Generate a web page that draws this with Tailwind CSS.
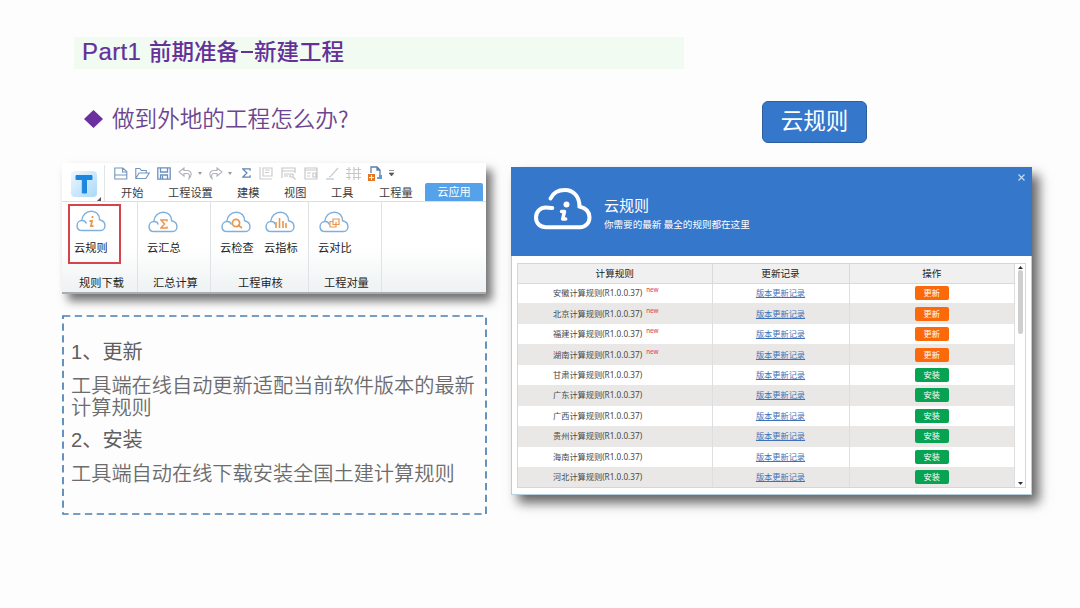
<!DOCTYPE html>
<html lang="zh-CN">

<head>
    <meta charset="UTF-8">
    <meta name="viewport" content="width=device-width, initial-scale=1.0">
    <title>前期准备-新建工程</title>
    <script src="https://cdn.jsdelivr.net/npm/@tailwindcss/browser@4"></script>
</head>

<body class="w-[1080px] h-[608px] overflow-hidden bg-[#fdfdfd] pt-[37px] font-['Noto_Sans','Noto_Sans_CJK_SC',sans-serif]">
    <svg class="hidden">
        <symbol id="cloud" viewBox="0 0 58 42">
            <path d="M11 20C12 9 20 2 30 2c9 0 15.500 6.500 15.500 16.500C52 20 56 24 56 30c0 5.500-4 9.500-9.500 9.500H12C6 39.500 2 35.500 2 30s4-10 10-10c3.500 0 6.500 2 7.500 5" fill="none" stroke="currentColor" stroke-width="2.800" stroke-linecap="round" />
        </symbol>
    </svg>

    <header class="ml-[74px] w-[610px] h-8 bg-[#f1fbf1] pl-2 flex items-center text-[22.500px] leading-8 text-[#64309a] font-medium">
        <h1 class="flex items-center whitespace-nowrap font-medium -mt-[3px]">
            <span class="w-[67px] font-['Liberation_Sans'] text-[24px] tracking-[0.400px] [-webkit-text-stroke:0.200px]">Part1</span>
            <span>前期准备</span>
            <span class="w-[15px] flex justify-center"><i class="block w-3 h-[2px] bg-[#64309a]"></i></span>
            <span>新建工程</span>
        </h1>
    </header>

    <main class="flex gap-6 pl-[62px]">
        <section class="w-[425px] shrink-0">
            <h2 class="h-[94px] pt-[35px] pl-[22px] flex items-start text-[22.600px] leading-[30px] text-[#6c4591] font-[350]">
                <svg class="w-[19px] h-[18px] mt-[6px] mr-[9px]" viewBox="0 0 19 18"><path d="M9.500 0L19 9l-9.500 9L0 9z" fill="#6c2fa0" /></svg>
                <span>做到外地的工程怎么办</span><span class="font-['Noto_Sans_CJK_SC']">?</span>
            </h2>

            <!-- ribbon -->
            <div class="w-[424px] h-[131px] bg-white shadow-[6px_7px_9px_rgba(0,0,0,0.550)] border-b-2 border-[#a9adb0] text-[#3c3c3c] text-[11.200px] whitespace-nowrap">
                <div class="h-[39px] flex border-b border-[#dcdfe2]">
                    <div class="w-[42px] pl-[9px] pt-[8px] flex items-end">
                        <svg class="w-[26px] h-[26px] mb-1" viewBox="0 0 26 26">
                            <defs><linearGradient id="tile" x2="1" y2="1"><stop stop-color="#eef7fe" /><stop offset="1" stop-color="#a9d9f8" /></linearGradient></defs>
                            <rect width="26" height="26" rx="4" fill="url(#tile)" />
                            <path d="M5 4.500h16v4H15.500V22h-4.200V8.500H5z" fill="#1b86e0" stroke="#1b86e0" stroke-linejoin="round" />
                        </svg>
                        <svg class="w-[4px] h-[4px]" viewBox="0 0 4 4"><path d="M4 0v4H0z" fill="#555" /></svg>
                    </div>
                    <div class="flex-1 border-l border-[#e2e4e7] mt-[2px]">
                        <div class="h-[16px] flex items-center pl-[9px]">
                            <svg class="w-[14px] h-[13px] shrink-0" viewBox="0 0 14 13" fill="none" stroke="#7296be" stroke-width="1.100"><path d="M.8 12V1h8l4 3.500V12zM8.500 1v4H13M.8 8H13" /></svg>
                            <svg class="w-[15px] h-[13px] ml-[7px] shrink-0" viewBox="0 0 15 13" fill="none" stroke="#7296be" stroke-width="1.100"><path d="M.8 11.500V1.500h4l1.500 2h5V6M.8 11.500L4 6h10.300l-3.500 5.500z" /></svg>
                            <svg class="w-[14px] h-[13px] ml-[7px] shrink-0" viewBox="0 0 14 13" fill="none" stroke="#6a90bf" stroke-width="1.300"><path d="M.8.800h12.400v11.400H.8zM3.500 1v4h7V1M3.500 12V8h7v4M5.500 9v3" /></svg>
                            <svg class="w-[15px] h-[13px] ml-[7px] shrink-0" viewBox="0 0 15 13" fill="none" stroke="#b0b4b8" stroke-width="1.100"><path d="M6 1L1 5l5 4V6.500h3c2 0 3 1.300 2 5 3.500-3.500 2.500-8-2-8H6z" /></svg>
                            <svg class="w-[4px] h-[3px] ml-[5px] shrink-0" viewBox="0 0 4 3"><path d="M0 0h4L2 3z" fill="#999" /></svg>
                            <svg class="w-[15px] h-[13px] ml-[6px] shrink-0" viewBox="0 0 15 13" fill="none" stroke="#b0b4b8" stroke-width="1.100"><path d="M9 1l5 4-5 4V6.500H6c-2 0-3 1.300-2 5-3.500-3.500-2.500-8 2-8h3z" /></svg>
                            <svg class="w-[4px] h-[3px] ml-[5px] shrink-0" viewBox="0 0 4 3"><path d="M0 0h4L2 3z" fill="#999" /></svg>
                            <svg class="w-[9px] h-[10px] ml-[10px] shrink-0" viewBox="0 0 10 11" fill="none" stroke="#5f86b6" stroke-width="1.400"><path d="M9 3V1H1l4.500 4.500L1 10h8V8" /></svg>
                            <svg class="w-[14px] h-[13px] ml-[8px] shrink-0" viewBox="0 0 14 13" fill="none" stroke="#cbcdcf" stroke-width="1.200"><path d="M1 0v12h12M4 1h9v8H4zM6 3h5M6 5.500h4" /></svg>
                            <svg class="w-[15px] h-[13px] ml-[8px] shrink-0" viewBox="0 0 15 13" fill="none" stroke="#c6c8ca" stroke-width="1.200"><path d="M1 11V1h13v5M1 4h13M3 7h5M3 9h4M9 7h3v3H9zM11.500 9.500l3 3" /></svg>
                            <svg class="w-[14px] h-[13px] ml-[8px] shrink-0" viewBox="0 0 14 13" fill="none" stroke="#c6c8ca" stroke-width="1.200"><path d="M1 12V1h12v11zM1 3h12M3 6h4M3 9h3M9 6h3v4H9z" /></svg>
                            <svg class="w-[13px] h-[13px] ml-[8px] shrink-0" viewBox="0 0 13 13" fill="none" stroke="#cecfd1" stroke-width="1.300"><path d="M12 1L5 9l-2 1M0 12h8" /></svg>
                            <svg class="w-[15px] h-[13px] ml-[7px] shrink-0" viewBox="0 0 15 13" fill="none" stroke="#c6c8ca" stroke-width="1.100"><path d="M3 0v13M8 0v13M12.500 0v13M0 2.500h5M7 2.500h8M0 6.500h15M0 10.500h5M7 10.500h8" /></svg>
                            <svg class="w-[15px] h-[15px] ml-[7px] shrink-0" viewBox="0 0 15 15"><path d="M3 7V1h6l3 3v8H9M9 1v3h3" fill="none" stroke="#5a7da8" stroke-width="1.300" /><path d="M11 9h3v4h-3z" fill="#5a9be0" /><path d="M0 8h7v7H0z" fill="#e37824" /><path d="M3.500 9v5M1 11.500h5" stroke="#fff" /></svg>
                            <svg class="w-[5px] h-[6px] ml-[6px] shrink-0" viewBox="0 0 5 6"><path d="M0 .5h5M0 3h5L2.500 6z" fill="#555" stroke="#555" stroke-width=".6" /></svg>
                        </div>
                        <nav class="h-[18px] mt-[2px] flex items-center leading-[18px]">
                            <span class="ml-[16px] w-[47px] pt-px">开始</span>
                            <span class="w-[69px] pt-px">工程设置</span>
                            <span class="w-[47px] pt-px">建模</span>
                            <span class="w-[47px] pt-px">视图</span>
                            <span class="w-[48px] pt-px">工具</span>
                            <span class="w-[46px] pt-px">工程量</span>
                            <span class="w-[58px] rounded-t-[2px] bg-[#55a2ea] text-center text-white">云应用</span>
                        </nav>
                    </div>
                </div>

                <div class="h-[90px] flex bg-linear-to-b from-white from-50% to-[#eef2f3] text-[#222]">
                    <div class="w-[76px] border-r border-[#dfe3e6] flex flex-col">
                        <div class="ml-[6px] mt-[2px] w-[53px] h-[60px] border-[2.500px] border-[#d5444a] flex flex-col items-start pl-[3px]">
                            <div class="relative w-[30px] h-[22px] ml-[3px] mt-[4px] text-[#7fb0dc]">
                                <svg class="w-full h-full"><use href="#cloud" /></svg>
                                <svg class="absolute left-[12px] top-[6px] w-[7px] h-[12px]" viewBox="0 0 7 12" fill="none" stroke="#e9974f" stroke-width="1.800"><path d="M4.500 0v2M1.500 5h2.500l-1 5h2.500" /></svg>
                            </div>
                            <span class="mt-[8px] ml-px leading-4">云规则</span>
                        </div>
                        <span class="mt-[11px] pl-[4px] text-center leading-4">规则下载</span>
                    </div>
                    <div class="w-[73px] border-r border-[#dfe3e6] flex flex-col pl-[9px]">
                        <div class="relative w-[30px] h-[22px] mt-[9px] ml-[1px] text-[#7fb0dc]">
                            <svg class="w-full h-full"><use href="#cloud" /></svg>
                            <svg class="absolute left-[12px] top-[8px] w-[8px] h-[10px]" viewBox="0 0 8 10" fill="none" stroke="#e9974f" stroke-width="1.500"><path d="M7 2.500V1H1l3.500 4L1 9h6V7.500" /></svg>
                        </div>
                        <span class="mt-[7px] leading-4">云汇总</span>
                        <span class="mt-[19px] pl-[6px] leading-4">汇总计算</span>
                    </div>
                    <div class="w-[98px] border-r border-[#dfe3e6] flex flex-col pl-[9px]">
                        <div class="flex gap-[10px]">
                            <div class="w-[34px]">
                                <div class="relative w-[30px] h-[22px] mt-[9px] ml-[1px] text-[#7fb0dc]">
                                    <svg class="w-full h-full"><use href="#cloud" /></svg>
                                    <svg class="absolute left-[10px] top-[7px] w-[12px] h-[11px]" viewBox="0 0 12 11" fill="none" stroke="#e9974f" stroke-width="1.700"><circle cx="5" cy="5" r="3.600" /><path d="M7 7l4 3" /></svg>
                                </div>
                                <div class="mt-[7px] leading-4">云检查</div>
                            </div>
                            <div class="w-[34px]">
                                <div class="relative w-[30px] h-[22px] mt-[9px] ml-[1px] text-[#7fb0dc]">
                                    <svg class="w-full h-full"><use href="#cloud" /></svg>
                                    <svg class="absolute left-[10px] top-[6px] w-[12px] h-[11px]" viewBox="0 0 12 11" stroke="#e9974f" stroke-width="1.600"><path d="M1 5v6M4.500 1v10M8 4v7M11 6v5" /></svg>
                                </div>
                                <div class="mt-[7px] leading-4">云指标</div>
                            </div>
                        </div>
                        <span class="mt-[19px] pl-[18px] leading-4">工程审核</span>
                    </div>
                    <div class="w-[73px] border-r border-[#dfe3e6] flex flex-col pl-[9px]">
                        <div class="relative w-[30px] h-[22px] mt-[9px] ml-[1px] text-[#7fb0dc]">
                            <svg class="w-full h-full"><use href="#cloud" /></svg>
                            <svg class="absolute left-[10px] top-[7px] w-[11px] h-[10px]" viewBox="0 0 11 10" fill="none" stroke="#e9974f" stroke-width="1.200"><path d="M4 1h6v5.500H4zM7 4v5H1V3.500h3" /></svg>
                        </div>
                        <span class="mt-[7px] leading-4">云对比</span>
                        <span class="mt-[19px] pl-[6px] leading-4">工程对量</span>
                    </div>
                </div>
            </div>

            <div class="relative mt-[21px] w-[425px] h-[200px] pl-[9px] pt-[25px] text-[20.200px] leading-[22px] text-[#6c6c6c] font-[350] whitespace-nowrap">
                <svg class="absolute inset-0 w-full h-full" fill="none"><rect x="1" y="1" width="423" height="198" stroke="#4a7fb3" stroke-width="1.700" stroke-dasharray="7.300 4.500" /></svg>
                <p class="mb-[11px] font-normal text-[#5f5f5f]"><span class="font-['Liberation_Sans']">1</span>、更新</p>
                <p class="mb-[10px]">工具端在线自动更新适配当前软件版本的最新<br>计算规则</p>
                <p class="mb-[11px] font-normal text-[#5f5f5f]"><span class="font-['Liberation_Sans']">2</span>、安装</p>
                <p>工具端自动在线下载安装全国土建计算规则</p>
            </div>
        </section>

        <section class="w-[521px] shrink-0">
            <div class="mt-[32px] ml-[251px] w-[105px] h-[42px] rounded-[6px] border border-[#2d5f9f] bg-[#3577cb] text-white text-[22.500px] leading-[38px] text-center">云规则</div>

            <!-- rules dialog -->
            <div class="mt-[24px] h-[328px] bg-white border border-t-0 border-[#b5cfdc] shadow-[7px_8px_11px_rgba(0,0,0,0.600)]">
                <div class="relative -mx-px h-[89px] bg-[#3577cb] flex text-white">
                    <svg class="w-[58px] h-[42px] ml-[23px] mt-[21px]" viewBox="0 0 58 42" fill="none" stroke="#fff" stroke-width="4" stroke-linecap="round">
                        <path d="M16.500 10.500C19 5 24.500 2 31 2c8.500 0 14.500 6.500 14.500 16.500 6 1.500 10 5.500 10 11 0 5.500-4 9.700-9.500 9.700H12C6 39.200 2 35.200 2 29.500s4-10 10-10c2.300 0 4.500.3 6.300.5" />
                        <circle cx="32.500" cy="16.500" r="3" fill="#fff" stroke="none" />
                        <path d="M27.500 23.500h3l-1.800 7.500h3" stroke-width="3.500" stroke-linejoin="round" />
                    </svg>
                    <div class="ml-[12px] mt-[28px]">
                        <div class="text-[15px] leading-[20px]">云规则</div>
                        <div class="mt-[3px] text-[9.550px] leading-[14px] whitespace-nowrap">你需要的最新 最全的规则都在这里</div>
                    </div>
                    <svg class="absolute right-[7px] top-[7px] w-[7px] h-[7px]" viewBox="0 0 7 7" stroke="#c5daf3" stroke-width="1.200"><path d="M.5.500l6 6M6.500.500l-6 6" /></svg>
                </div>

                <div class="mt-[7px] ml-[5px] w-[509px] h-[225px] border border-[#d6d6d6] flex">
                    <table class="w-[497px] table-fixed border-collapse text-center text-[#484848] text-[8.200px] leading-[12px]">
                        <thead>
                            <tr class="h-[19px] bg-[#f0f0f0] text-[9.600px] text-[#222]">
                                <th class="w-[194px] p-0 pt-[2px] font-normal border-r border-b border-[#d9d9d9]">计算规则</th>
                                <th class="w-[137px] p-0 pt-[2px] font-normal border-r border-b border-[#d9d9d9]">更新记录</th>
                                <th class="p-0 pt-[2px] font-normal border-r border-b border-[#d9d9d9]">操作</th>
                            </tr>
                        </thead>
                        <tbody id="rules"></tbody>
                    </table>
                    <div class="flex-1 flex flex-col items-center justify-between py-[2px] bg-white">
                        <svg class="w-[5px] h-[3px]" viewBox="0 0 5 3"><path d="M2.500 0L5 3H0z" fill="#333" /></svg>
                        <div class="w-[5px] h-[64px] mt-px mb-auto rounded-full bg-[#cfcfcf]"></div>
                        <svg class="w-[5px] h-[3px]" viewBox="0 0 5 3"><path d="M0 0h5L2.500 3z" fill="#333" /></svg>
                    </div>
                </div>
            </div>
        </section>
    </main>

    <script>
        const rules = ['安徽', '北京', '福建', '湖南', '甘肃', '广东', '广西', '贵州', '海南', '河北'];

        // the first four rules are installed already and have an update
        document.getElementById('rules').innerHTML = rules.map((name, i) => {
            const update = i < 4;
            return `<tr class="h-[20.450px] ${i % 2 ? 'bg-[#e9e8e6]' : 'bg-white'}">
                <td class="p-0 pl-[35px] text-left whitespace-nowrap border-r border-[#dedede]">${name}计算规则(R1.0.0.37)${update ? '<span class="relative -top-[4px] ml-[4px] text-[6.200px] leading-none font-medium text-[#e2555a]">new</span>' : ''}</td>
                <td class="p-0 border-r border-[#dedede]"><a href="#" class="text-[#3f72b8] underline">版本更新记录</a></td>
                <td class="p-0 border-r border-[#dedede]"><button class="block mx-auto w-[34px] h-[14px] rounded-[2px] text-white leading-[14px] ${update ? 'bg-[#fb6a0a]' : 'bg-[#08a253]'}">${update ? '更新' : '安装'}</button></td>
            </tr>`;
        }).join('');
    </script>
</body>

</html>
